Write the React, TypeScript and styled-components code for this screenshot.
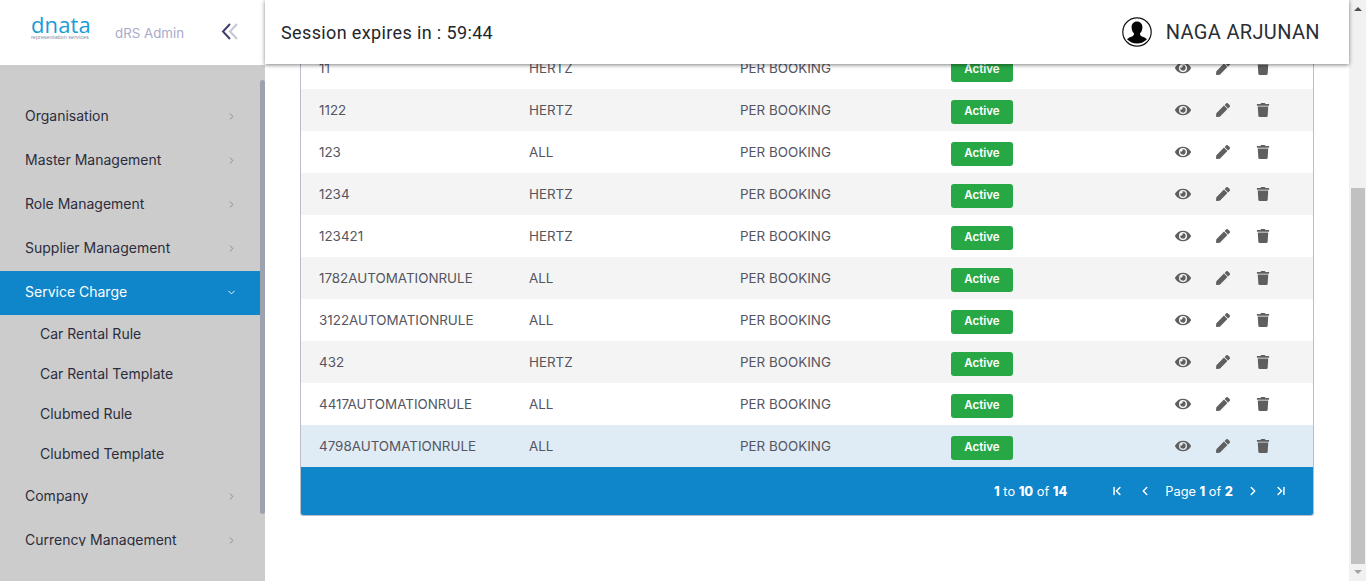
import styled, { createGlobalStyle } from "styled-components";
import { ChevronRight, ChevronDown, ChevronLeft, ChevronFirst, ChevronLast } from "lucide-react";
import { FaEye, FaPen, FaTrash } from "react-icons/fa";

const GlobalStyle = createGlobalStyle`
  html, body {
    margin: 0;
    padding: 0;
    height: 581px;
    overflow: hidden;
    background: #ffffff;
    font-family: "Inter", "Liberation Sans", sans-serif;
  }
`;

const Page = styled.div`
  display: flex;
  width: 1366px;
  height: 581px;
  overflow: hidden;
`;

const Shell = styled.div`
  flex: 1;
  display: flex;
  min-width: 0;
`;

const Sidebar = styled.aside`
  width: 265px;
  flex-shrink: 0;
  display: flex;
  flex-direction: column;
  background: #cccccc;
`;

const Brand = styled.div`
  height: 65px;
  flex-shrink: 0;
  background: #ffffff;
  display: flex;
  align-items: flex-start;
  padding: 16px 0 0 31px;
  box-sizing: border-box;
`;

const Logo = styled.div`
  width: 84px;
  display: flex;
  flex-direction: column;
`;

const LogoWord = styled.span`
  font-family: "Open Sans", sans-serif;
  font-size: 22px;
  font-weight: 500;
  line-height: 16px;
  letter-spacing: 0.1px;
  color: #1b9bd7;
`;

const LogoSub = styled.span`
  font-family: "Liberation Sans", sans-serif;
  font-size: 5.6px;
  line-height: 7px;
  margin-top: 2px;
  color: #8a8fa5;
`;

const BrandName = styled.span`
  font-size: 13.3px;
  line-height: 16px;
  margin-top: 9px;
  width: 106px;
  color: #a8abc8;
`;

const CollapseIcon = styled.svg`
  margin-top: 6px;
`;

const MenuWrap = styled.div`
  flex: 1;
  min-height: 0;
  display: flex;
  padding-bottom: 35px;
`;

const Menu = styled.nav`
  width: 260px;
  flex-shrink: 0;
  padding-top: 30px;
  overflow: hidden;
`;

const MenuItem = styled.div<{ $active?: boolean }>`
  height: 44px;
  display: flex;
  align-items: center;
  justify-content: space-between;
  box-sizing: border-box;
  padding: 0 23px 3px 25px;
  font-size: 14px;
  color: ${(p) => (p.$active ? "#ffffff" : "#2c2c3c")};
  background: ${(p) => (p.$active ? "#0f85ca" : "transparent")};

  svg {
    color: ${(p) => (p.$active ? "#ffffff" : "#85859a")};
    margin-top: 2px;
  }
`;

const SubItem = styled.div`
  height: 40px;
  display: flex;
  align-items: center;
  box-sizing: border-box;
  padding: 0 0 3px 40px;
  font-size: 14px;
  color: #2c2c3c;
`;

const MenuScroll = styled.div`
  width: 5px;
  height: 434px;
  margin-top: 15px;
  background: #9ca3af;
  border-radius: 3px;
`;

const Main = styled.div`
  flex: 1;
  min-width: 0;
  display: flex;
  flex-direction: column;
`;

const Topbar = styled.header`
  height: 64px;
  flex-shrink: 0;
  position: relative;
  z-index: 2;
  background: #ffffff;
  box-shadow: 0 1px 4px rgba(0, 0, 0, 0.5);
  display: flex;
  align-items: center;
  justify-content: space-between;
  padding: 0 29px 0 16px;
`;

const Session = styled.div`
  font-family: "Roboto", sans-serif;
  font-size: 18px;
  letter-spacing: 0.37px;
  color: #22262c;
`;

const User = styled.div`
  display: flex;
  align-items: center;
  gap: 14px;
  font-family: "Roboto", sans-serif;
  font-size: 20px;
  letter-spacing: 0.35px;
  color: #2a2f36;
`;

const Content = styled.main`
  flex: 1;
  min-height: 0;
  overflow: hidden;
  display: flex;
  flex-direction: column;
  justify-content: flex-end;
  padding: 0 35px 65px;
`;

const Table = styled.div`
  flex-shrink: 0;
  border: solid #babfc7;
  border-width: 0 1px 1px;
  border-radius: 0 0 3px 3px;
  overflow: hidden;
`;

const Row = styled.div<{ $tone: "plain" | "alt" | "selected" }>`
  height: 42px;
  display: grid;
  grid-template-columns: 210px 211px 211px 1fr;
  align-items: center;
  padding-left: 18px;
  font-size: 13.4px;
  color: #55555f;
  background: ${(p) =>
    p.$tone === "selected" ? "#dfebf5" : p.$tone === "alt" ? "#f4f4f4" : "#ffffff"};
`;

const StatusCell = styled.div`
  display: flex;
  align-items: center;
`;

const Badge = styled.span`
  width: 62px;
  height: 24px;
  margin-top: 4px;
  padding-bottom: 3px;
  box-sizing: border-box;
  display: flex;
  align-items: center;
  justify-content: center;
  border-radius: 3px;
  background: #28a745;
  color: #ffffff;
  font-size: 11.5px;
  font-weight: 600;
`;

const Actions = styled.div`
  display: grid;
  grid-template-columns: 40px 40px 40px;
  justify-items: center;
  align-items: center;
  margin: 0 0 0 150px;
  color: #5f5f5f;
`;

const Footer = styled.div`
  height: 48px;
  background: #0f85ca;
  color: #ffffff;
  font-size: 12.8px;
  display: flex;
  align-items: center;
  justify-content: flex-end;
  padding-right: 18px;

  b {
    font-weight: 800;
  }
`;

const PageCount = styled.span`
  margin-right: 36px;
`;

const PageLabel = styled.span`
  margin: 0 6px;
`;

const PagerIcon = styled.span`
  width: 14px;
  display: flex;
  justify-content: center;
  margin: 0 7px;
`;

const ScrollTrack = styled.div`
  width: 17px;
  flex-shrink: 0;
  background: #f1f1f1;
  display: flex;
  flex-direction: column;
  align-items: center;
  box-sizing: border-box;
`;

const ScrollThumb = styled.div`
  width: 14px;
  height: 376px;
  margin: 177px 0 0 1px;
  background: #c1c1c1;
`;

const Arrow = styled.span<{ $down?: boolean }>`
  width: 0;
  height: 0;
  margin-top: ${(p) => (p.$down ? "6px" : "7px")};
  border-left: 4px solid transparent;
  border-right: 4px solid transparent;
  ${(p) =>
    p.$down ? "border-top: 4px solid #a3a3a3;" : "border-bottom: 4px solid #505050;"}
`;

const rows = [
  ["11", "HERTZ"],
  ["1122", "HERTZ"],
  ["123", "ALL"],
  ["1234", "HERTZ"],
  ["123421", "HERTZ"],
  ["1782AUTOMATIONRULE", "ALL"],
  ["3122AUTOMATIONRULE", "ALL"],
  ["432", "HERTZ"],
  ["4417AUTOMATIONRULE", "ALL"],
  ["4798AUTOMATIONRULE", "ALL"],
];

const App = () => {
  return (
    <Page>
      <GlobalStyle />
      <Shell>
        <Sidebar>
          <Brand>
            <Logo>
              <LogoWord>dnata</LogoWord>
              <LogoSub>representation services</LogoSub>
            </Logo>
            <BrandName>dRS Admin</BrandName>
            <CollapseIcon width="20" height="20" viewBox="0 0 20 20" fill="none" strokeWidth="2">
              <path d="M9 2 L2 9.5 L9 17" stroke="#40406f" />
              <path d="M16 2 L9 9.5 L16 17" stroke="#c5c5d8" />
            </CollapseIcon>
          </Brand>
          <MenuWrap>
            <Menu>
              <MenuItem>Organisation<ChevronRight size={11} /></MenuItem>
              <MenuItem>Master Management<ChevronRight size={11} /></MenuItem>
              <MenuItem>Role Management<ChevronRight size={11} /></MenuItem>
              <MenuItem>Supplier Management<ChevronRight size={11} /></MenuItem>
              <MenuItem $active>Service Charge<ChevronDown size={11} /></MenuItem>
              <SubItem>Car Rental Rule</SubItem>
              <SubItem>Car Rental Template</SubItem>
              <SubItem>Clubmed Rule</SubItem>
              <SubItem>Clubmed Template</SubItem>
              <MenuItem>Company<ChevronRight size={11} /></MenuItem>
              <MenuItem>Currency Management<ChevronRight size={11} /></MenuItem>
            </Menu>
            <MenuScroll />
          </MenuWrap>
        </Sidebar>
        <Main>
          <Topbar>
            <Session>Session expires in : 59:44</Session>
            <User>
              <svg width="30" height="30" viewBox="0 0 30 30">
                <circle cx="15" cy="15" r="14.2" fill="#ffffff" stroke="#111111" strokeWidth="1.2" />
                <path
                  d="M15 4.5c-3.6 0-5.6 2.8-5.4 6.2.1 2.2 1 4.300 2.300 5.600.3 1-.1 2-1 2.600-1.800 1-4.400 1.500-5.900 3.300a14 14 0 0 0 20 0c-1.500-1.800-4.100-2.300-5.900-3.300-.9-.6-1.300-1.600-1-2.600 1.300-1.300 2.200-3.400 2.300-5.600.2-3.400-1.800-6.200-5.400-6.200z"
                  fill="#050505"
                />
              </svg>
              NAGA ARJUNAN
            </User>
          </Topbar>
          <Content>
            <Table>
              {rows.map(([name, supplier], i) => (
                <Row key={name} $tone={i === 9 ? "selected" : i % 2 === 1 ? "alt" : "plain"}>
                  <span>{name}</span>
                  <span>{supplier}</span>
                  <span>PER BOOKING</span>
                  <StatusCell>
                    <Badge>Active</Badge>
                    <Actions>
                      <FaEye size={16} />
                      <FaPen size={14} />
                      <FaTrash size={14} />
                    </Actions>
                  </StatusCell>
                </Row>
              ))}
              <Footer>
                <PageCount>
                  <b>1</b> to <b>10</b> of <b>14</b>
                </PageCount>
                <PagerIcon><ChevronFirst size={14} strokeWidth={2.5} /></PagerIcon>
                <PagerIcon><ChevronLeft size={14} strokeWidth={2.5} /></PagerIcon>
                <PageLabel>
                  Page <b>1</b> of <b>2</b>
                </PageLabel>
                <PagerIcon><ChevronRight size={14} strokeWidth={2.5} /></PagerIcon>
                <PagerIcon><ChevronLast size={14} strokeWidth={2.5} /></PagerIcon>
              </Footer>
            </Table>
          </Content>
        </Main>
      </Shell>
      <ScrollTrack>
        <Arrow />
        <ScrollThumb />
        <Arrow $down />
      </ScrollTrack>
    </Page>
  );
};

export default App;
